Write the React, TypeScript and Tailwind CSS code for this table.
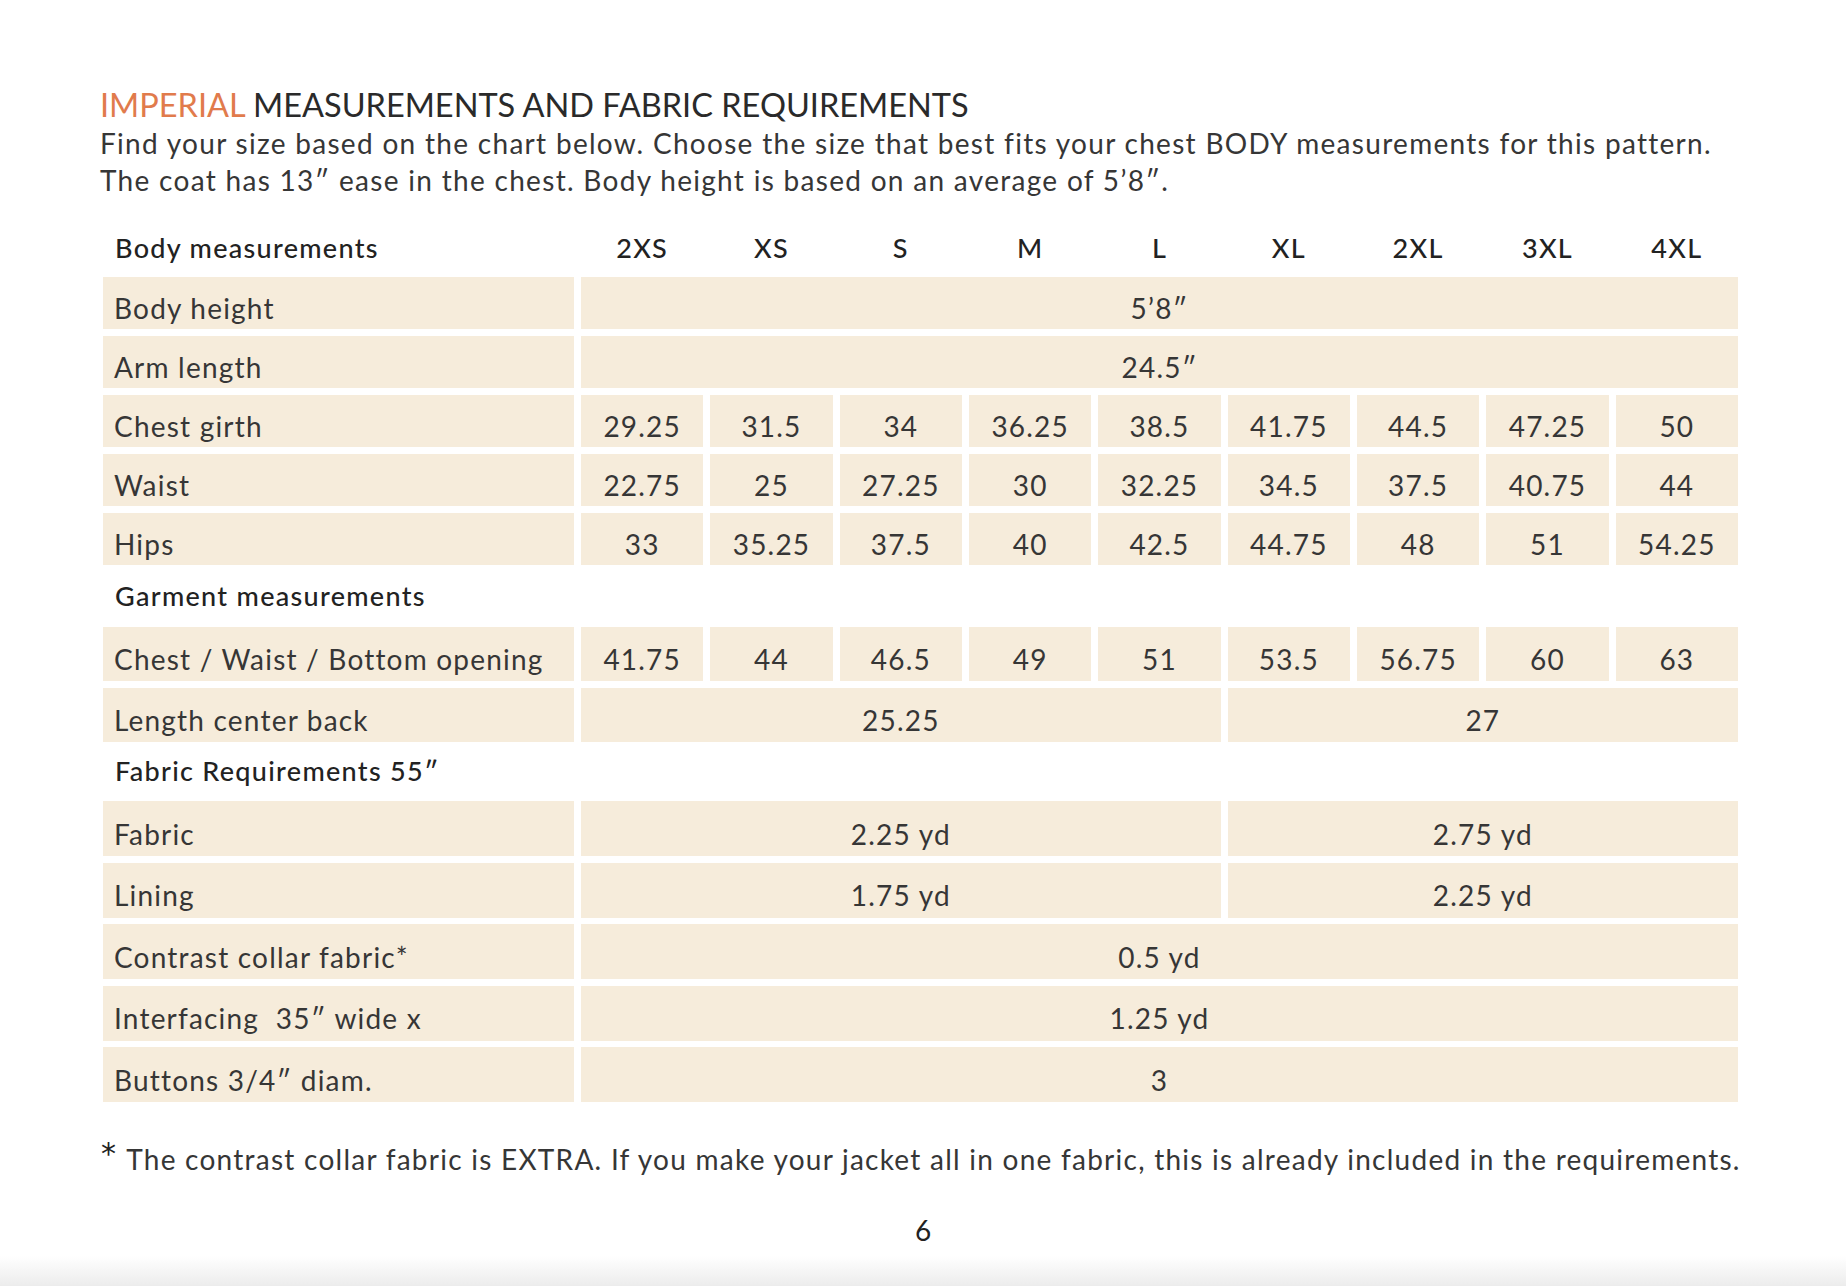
const sizes = ["2XS", "XS", "S", "M", "L", "XL", "2XL", "3XL", "4XL"];

type Row = { label: string; cells: { value: string; span: number }[] };

const each = (vals: string[]) => vals.map((v) => ({ value: v, span: 1 }));

const bodyRows: Row[] = [
  { label: "Body height", cells: [{ value: "5\u20198\u2033", span: 9 }] },
  { label: "Arm length", cells: [{ value: "24.5\u2033", span: 9 }] },
  { label: "Chest girth", cells: each(["29.25", "31.5", "34", "36.25", "38.5", "41.75", "44.5", "47.25", "50"]) },
  { label: "Waist", cells: each(["22.75", "25", "27.25", "30", "32.25", "34.5", "37.5", "40.75", "44"]) },
  { label: "Hips", cells: each(["33", "35.25", "37.5", "40", "42.5", "44.75", "48", "51", "54.25"]) },
];

const garmentRows: Row[] = [
  { label: "Chest / Waist / Bottom opening", cells: each(["41.75", "44", "46.5", "49", "51", "53.5", "56.75", "60", "63"]) },
  { label: "Length center back", cells: [{ value: "25.25", span: 5 }, { value: "27", span: 4 }] },
];

const fabricRows: Row[] = [
  { label: "Fabric", cells: [{ value: "2.25 yd", span: 5 }, { value: "2.75 yd", span: 4 }] },
  { label: "Lining", cells: [{ value: "1.75 yd", span: 5 }, { value: "2.25 yd", span: 4 }] },
  { label: "Contrast collar fabric*", cells: [{ value: "0.5 yd", span: 9 }] },
  { label: "Interfacing\u00a0 35\u2033 wide x", cells: [{ value: "1.25 yd", span: 9 }] },
  { label: "Buttons 3/4\u2033 diam.", cells: [{ value: "3", span: 9 }] },
];

const spanClass: Record<number, string> = {
  1: "col-span-1",
  4: "col-span-4",
  5: "col-span-5",
  9: "col-span-9",
};

const gridCols = "grid grid-cols-[471px_repeat(9,minmax(0,1fr))] gap-x-[7px]";

function TableRow({ row, height }: { row: Row; height: string }) {
  return (
    <div className={`${gridCols} ${height}`}>
      <div className="bg-[#f6ecdb] flex items-center pl-[11px] pt-[10px]">{row.label}</div>
      {row.cells.map((c, i) => (
        <div
          key={i}
          className={`bg-[#f6ecdb] flex items-center justify-center pt-[10px] ${spanClass[c.span]}`}
        >
          {c.value}
        </div>
      ))}
    </div>
  );
}

function SectionTitle({ children, height }: { children: string; height: string }) {
  return (
    <div
      className={`flex items-center pl-[12px] font-medium text-[27px] tracking-[1.3px] text-[#222] ${height}`}
    >
      {children}
    </div>
  );
}

export default function App() {
  return (
    <div className="min-h-[1286px] flex flex-col bg-white text-[#363636] font-['Lato',sans-serif]">
      <main className="pl-[100px] pt-[85px]">
        <h1 className="text-[32.5px] leading-[40px]">
          <span className="text-[#e17b4c]">IMPERIAL</span>{" "}
          <span className="text-[#2a2a2a]">MEASUREMENTS AND FABRIC REQUIREMENTS</span>
        </h1>
        <p className="text-[28px] leading-[37px] tracking-[1.3px]">
          Find your size based on the chart below. Choose the size that best fits your chest BODY
          measurements for this pattern.
          <br />
          The coat has 13&#8243; ease in the chest. Body height is based on an average of 5&#8217;8&#8243;.
        </p>

        <section className="mt-[20px] ml-[3px] w-[1635px] text-[28px] tracking-[1.2px]">
          <div
            className={`${gridCols} h-[58px] items-center font-medium text-[27px] tracking-[1.3px] text-[#222]`}
          >
            <div className="pl-[12px]">Body measurements</div>
            {sizes.map((s) => (
              <div key={s} className="text-center">
                {s}
              </div>
            ))}
          </div>
          <div className="flex flex-col gap-[7px]">
            {bodyRows.map((r) => (
              <TableRow key={r.label} row={r} height="h-[52px]" />
            ))}
          </div>
          <SectionTitle height="h-[62px]">Garment measurements</SectionTitle>
          <div className="flex flex-col gap-[7px]">
            {garmentRows.map((r) => (
              <TableRow key={r.label} row={r} height="h-[54px]" />
            ))}
          </div>
          <SectionTitle height="h-[59px]">Fabric Requirements 55&#8243;</SectionTitle>
          <div className="flex flex-col gap-[6.5px]">
            {fabricRows.map((r) => (
              <TableRow key={r.label} row={r} height="h-[55px]" />
            ))}
          </div>
        </section>

        <p className="mt-[39px] ml-[1px] text-[28px] leading-[36px] tracking-[1.25px] flex items-start">
          <span className="font-['DejaVu_Sans',sans-serif] text-[30px] leading-[26px] mr-[9px] text-[#222]">
            *
          </span>
          <span>
            The contrast collar fabric is EXTRA. If you make your jacket all in one fabric, this is
            already included in the requirements.
          </span>
        </p>
      </main>
      <div className="mt-[35px] text-center text-[28px] leading-[36px] text-[#222]">6</div>
      <div className="flex-1" />
      <div className="h-[30px] bg-gradient-to-b from-white to-[#ececec]" />
    </div>
  );
}
